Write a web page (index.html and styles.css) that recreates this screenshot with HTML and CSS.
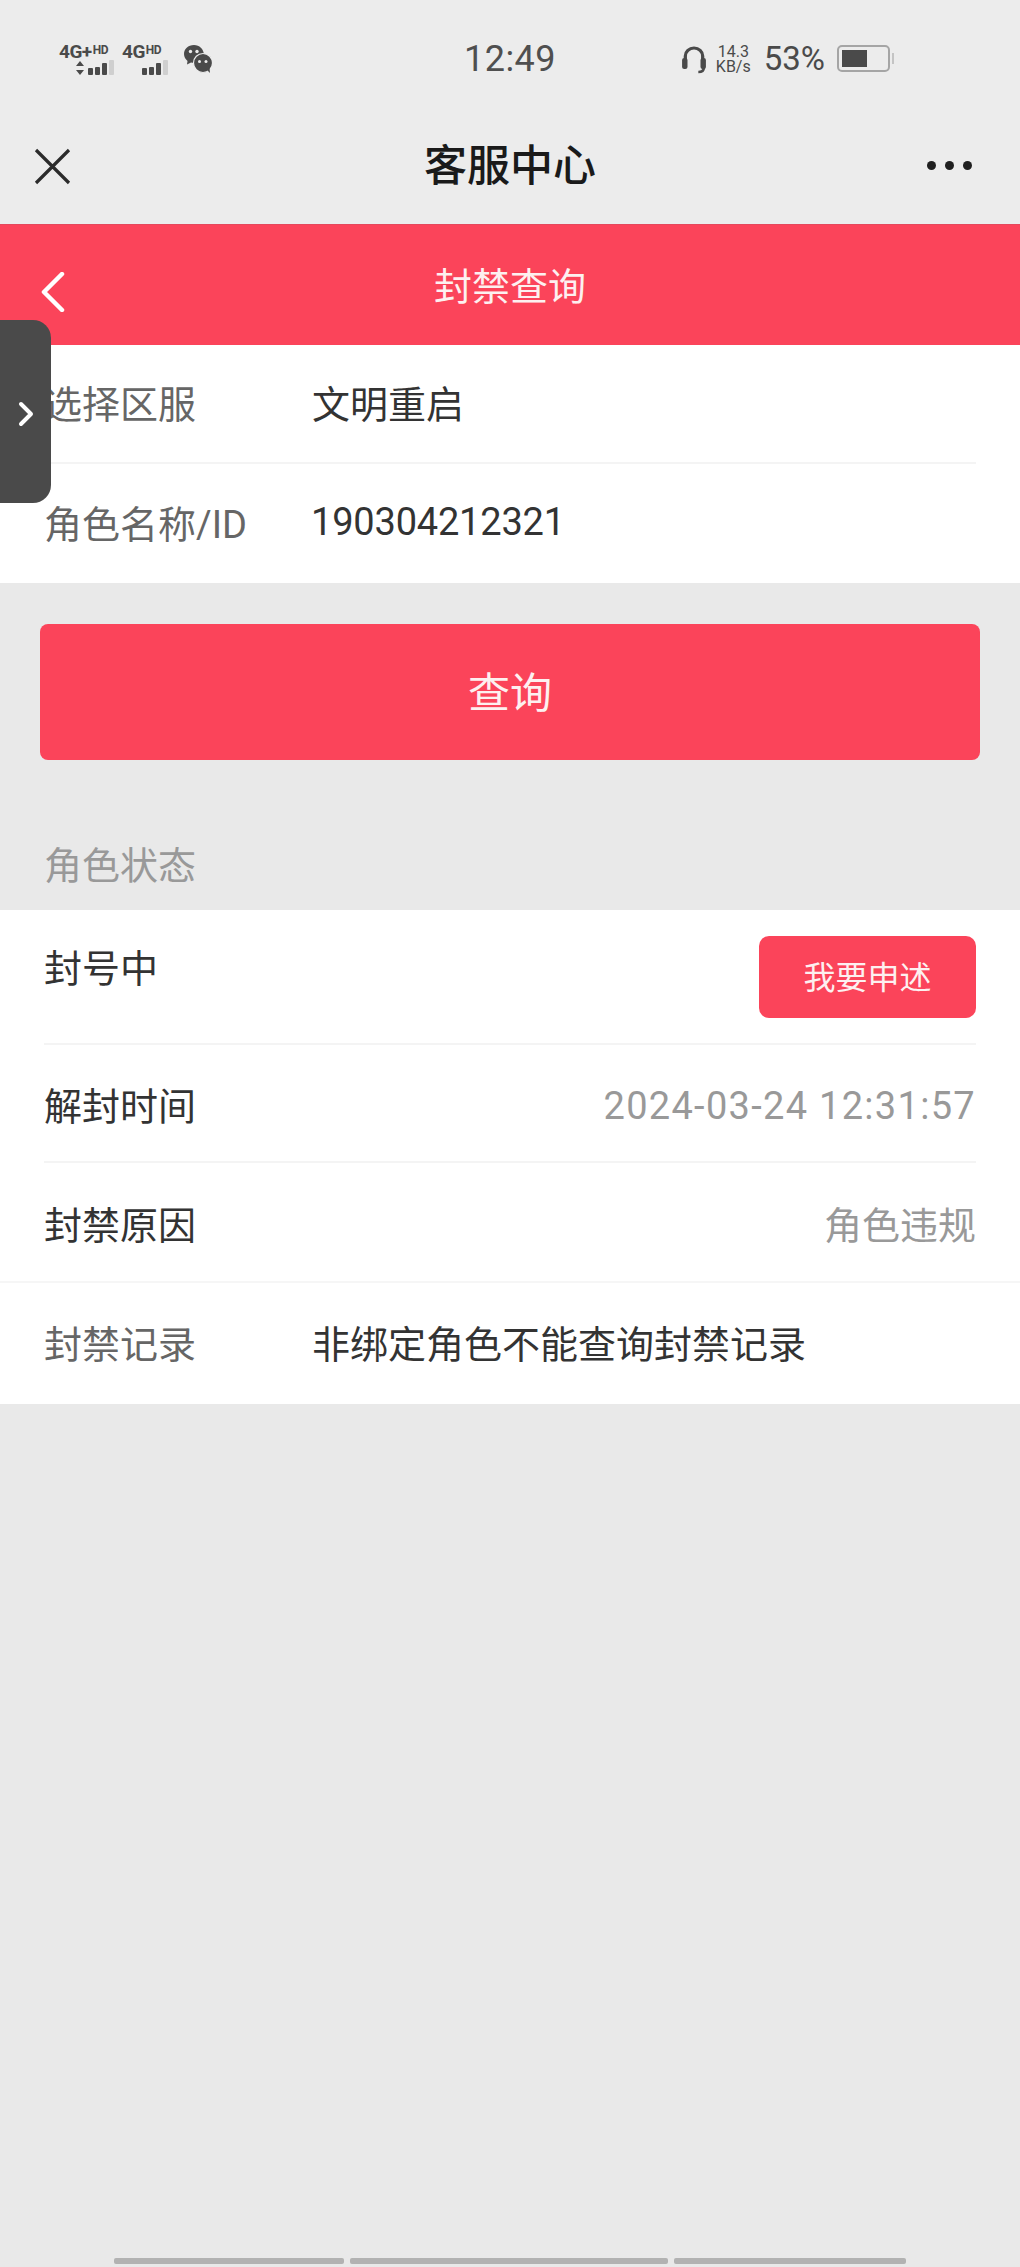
FILE: index.html
```html
<!DOCTYPE html>
<html lang="zh-CN">
<head>
  <meta charset="UTF-8" />
  <meta name="viewport" content="width=device-width, initial-scale=1" />
  <title>客服中心</title>
  <link rel="stylesheet" href="styles.css">
</head>
<body>

<div class="top">
  <!-- Phone status bar -->
  <div class="status-bar">
    <div class="status-left">
      <div class="sim">
        <div class="sim-label">4G+<small>HD</small></div>
        <div class="signal">
          <svg class="updown" width="10" height="14" viewBox="0 0 10 14"><path d="M5 0l4 5H1zM5 14L1 9h8z" fill="#4a4a4a"/></svg>
          <i class="b1"></i><i class="b2"></i><i class="b3"></i><i class="b4"></i>
        </div>
      </div>
      <div class="sim sim-second">
        <div class="sim-label">4G<small>HD</small></div>
        <div class="signal">
          <i class="b1"></i><i class="b2"></i><i class="b3"></i><i class="b4"></i>
        </div>
      </div>
      <svg class="wechat" width="30" height="30" viewBox="0 0 30 30">
        <path d="M11 1C5 1 1 5 1 10c0 3 1.500 5.300 3.500 7L4 20.500 8 18.500c1 .3 2 .5 3 .5 4.500-4 5-5.500 10-8.500C20.500 5 16.500 1 11 1z" fill="#4a4a4a"/>
        <circle cx="20" cy="19" r="9.500" fill="#4a4a4a" stroke="#ececec" stroke-width="1.200"/>
        <path d="M24 26l3 3-.5-5z" fill="#4a4a4a"/>
        <circle cx="7.500" cy="7.500" r="1.700" fill="#ececec"/>
        <circle cx="14" cy="7.500" r="1.700" fill="#ececec"/>
        <circle cx="16.500" cy="17.500" r="1.500" fill="#ececec"/>
        <circle cx="23" cy="17.500" r="1.500" fill="#ececec"/>
      </svg>
    </div>
    <div class="clock">12:49</div>
    <div class="status-right">
      <svg class="headset" width="26" height="30" viewBox="0 0 24 30" preserveAspectRatio="none">
        <path d="M4 17V12a8 8 0 0 1 16 0v5" fill="none" stroke="#4a4a4a" stroke-width="3"/>
        <rect x="1" y="14" width="5" height="11" rx="2" fill="#4a4a4a"/>
        <rect x="18" y="14" width="5" height="11" rx="2" fill="#4a4a4a"/>
        <path d="M21 24c0 3-2 4-5 4" fill="none" stroke="#4a4a4a" stroke-width="2.500"/>
      </svg>
      <div class="speed"><span>14.3</span><span>KB/s</span></div>
      <div class="battery-text">53%</div>
      <div class="battery"><div class="battery-fill"></div></div>
    </div>
  </div>

  <!-- WeChat title bar -->
  <div class="title-bar">
    <svg class="close-icon" width="37" height="37" viewBox="0 0 37 37">
      <path d="M2 2l33 33M35 2L2 35" stroke="#2b2b2b" stroke-width="3.200" fill="none"/>
    </svg>
    <h1>客服中心</h1>
    <div class="dots"><i></i><i></i><i></i></div>
  </div>
</div>

<header class="page-head">
  <svg class="back-icon" width="24" height="40" viewBox="0 0 24 40">
    <path d="M21 2L3 20l18 18" fill="none" stroke="#fff" stroke-width="4.500" stroke-linecap="round" stroke-linejoin="round"/>
  </svg>
  <h2>封禁查询</h2>
</header>

<main>
  <section class="list">
    <div class="row row-inset">
      <span class="label">选择区服</span>
      <span class="value">文明重启</span>
    </div>
    <div class="row">
      <span class="label">角色名称/ID</span>
      <span class="value value-num">190304212321</span>
    </div>
  </section>

  <div class="query-wrap">
    <button class="query-btn">查询</button>
  </div>

  <div class="section-title">角色状态</div>

  <section class="list">
    <div class="row row-inset row-status">
      <span class="label label-dark">封号中</span>
      <button class="appeal-btn">我要申述</button>
    </div>
    <div class="row row-inset row-split">
      <span class="label label-dark">解封时间</span>
      <span class="muted muted-date">2024-03-24 12:31:57</span>
    </div>
    <div class="row row-full row-split">
      <span class="label label-dark">封禁原因</span>
      <span class="muted">角色违规</span>
    </div>
    <div class="row row-last">
      <span class="label">封禁记录</span>
      <span class="value">非绑定角色不能查询封禁记录</span>
    </div>
  </section>
</main>

<!-- Floating side tab -->
<div class="side-tab">
  <svg width="17" height="26" viewBox="0 0 17 26">
    <path d="M3 3l10 10L3 23" fill="none" stroke="#fff" stroke-width="4" stroke-linecap="round" stroke-linejoin="round"/>
  </svg>
</div>

<footer class="bottom-bars">
  <i class="bar-a"></i><i class="bar-b"></i><i class="bar-c"></i>
</footer>

</body>
</html>
```

FILE: styles.css
```css
/* Reset */
* {
  box-sizing: border-box;
  margin: 0;
  padding: 0;
}

body {
  font-family: Roboto, "Noto Sans CJK SC", sans-serif;
  background-color: #e9e9e9;
  color: #333;
  min-height: 2267px;
  display: flex;
  flex-direction: column;
  position: relative;
  overflow: hidden;
}

/* Status bar */
.top {
  background: #ececec;
  height: 224px;
}

.status-bar {
  height: 112px;
  display: grid;
  grid-template-columns: 1fr auto 1fr;
  align-items: center;
  color: #4a4a4a;
  padding-top: 5px;
}

.status-left {
  display: flex;
  align-items: center;
  padding-left: 59px;
}

.sim {
  width: 55px;
}

.sim-second {
  margin-left: 8px;
  width: 46px;
}

.sim-label {
  font-size: 19px;
  font-weight: 700;
  line-height: 17px;
  letter-spacing: -0.5px;
  white-space: nowrap;
}

.sim-label small {
  font-size: 12px;
  vertical-align: 4px;
  margin-left: 1px;
}

.signal {
  display: flex;
  align-items: flex-end;
  justify-content: flex-end;
  gap: 2px;
  height: 15px;
}

.signal .updown {
  margin-right: 1px;
}

.signal i {
  display: block;
  width: 5px;
  background: #4a4a4a;
  border-radius: 1px;
}

.signal .b1 { height: 7px; }
.signal .b2 { height: 8px; }
.signal .b3 { height: 12px; }
.signal .b4 { height: 15px; background: #cfcfcf; }

.wechat {
  margin-left: 15px;
}

.clock {
  font-size: 36px;
  color: #4f4f4f;
  letter-spacing: 0.5px;
}

.status-right {
  display: flex;
  align-items: center;
  justify-content: flex-end;
  padding-right: 130px;
}

.speed {
  display: flex;
  flex-direction: column;
  align-items: center;
  font-size: 16px;
  line-height: 15px;
  margin-left: 9px;
}

.battery-text {
  font-size: 33px;
  margin-left: 13px;
}

.battery {
  width: 53px;
  height: 27px;
  border: 2px solid #a5a5a5;
  border-radius: 5px;
  padding: 3px;
  margin-left: 12px;
  position: relative;
}

.battery::after {
  content: "";
  position: absolute;
  right: -6px;
  top: 6px;
  width: 2px;
  height: 11px;
  background: #c4c4c4;
}

.battery-fill {
  width: 25px;
  height: 100%;
  background: #4a4a4a;
}

/* Title bar */
.title-bar {
  height: 112px;
  display: grid;
  grid-template-columns: 1fr auto 1fr;
  align-items: center;
  padding: 0 48px 4px 34px;
}

.title-bar h1 {
  font-size: 43px;
  font-weight: 500;
  color: #1a1a1a;
  line-height: 1;
  margin-left: 14px;
}

.dots {
  display: flex;
  justify-content: flex-end;
  gap: 9px;
  margin-top: -2px;
}

.dots i {
  display: block;
  width: 9px;
  height: 9px;
  border-radius: 50%;
  background: #1f1f1f;
}

/* Red header */
.page-head {
  height: 121px;
  background: #fb445a;
  border-top: 1px solid #e4485c;
  display: flex;
  align-items: center;
  justify-content: center;
  position: relative;
  padding-top: 3px;
}

.page-head h2 {
  font-size: 38px;
  font-weight: 400;
  color: #fdf0f0;
  line-height: 1;
}

.back-icon {
  position: absolute;
  left: 41px;
  top: 47px;
}

/* Lists */
.list {
  background: #fff;
}

.row {
  height: 119px;
  margin: 0 44px;
  padding-bottom: 4px;
  display: flex;
  align-items: center;
  font-size: 38px;
}

.row-inset {
  border-bottom: 2px solid #f4f4f4;
}

.row-full {
  margin: 0;
  padding: 0 44px;
  border-bottom: 2px solid #f6f6f6;
}

.row-split {
  justify-content: space-between;
  height: 118px;
  padding-top: 0;
  padding-bottom: 0;
}

.row-full.row-split {
  height: 120px;
}

.row-last {
  height: 121px;
}

.row-status {
  height: 135px;
  justify-content: space-between;
  align-items: flex-start;
  padding: 26px 0 0;
}

.row-status .label {
  margin-top: 2px;
}

.label {
  width: 268px;
  flex-shrink: 0;
  color: #666;
  white-space: nowrap;
}

.label-dark {
  color: #333;
}

.value {
  color: #333;
  white-space: nowrap;
}

.value-num {
  letter-spacing: -0.2px;
  margin-left: -1px;
}

.muted {
  color: #999;
  white-space: nowrap;
}

.muted-date {
  letter-spacing: 1.3px;
  margin-top: 5px;
}

/* Buttons */
.query-wrap {
  padding: 41px 40px 0;
}

.query-btn {
  display: block;
  width: 100%;
  height: 136px;
  padding-bottom: 6px;
  border: none;
  border-radius: 8px;
  background: #fb445a;
  color: #fdf0f0;
  font-family: inherit;
  font-size: 42px;
}

.appeal-btn {
  width: 217px;
  height: 82px;
  padding-bottom: 5px;
  border: none;
  border-radius: 10px;
  background: #fb445a;
  color: #fdf0f0;
  font-family: inherit;
  font-size: 32px;
}

.section-title {
  height: 150px;
  padding: 84px 44px 0;
  font-size: 38px;
  line-height: 44px;
  color: #999;
}

/* Floating tab */
.side-tab {
  position: absolute;
  left: 0;
  top: 320px;
  width: 51px;
  height: 183px;
  background: #4a4a4a;
  border-radius: 0 18px 18px 0;
  display: flex;
  align-items: center;
  padding: 5px 0 0 18px;
}

/* Bottom bars */
.bottom-bars {
  margin-top: auto;
  height: 9px;
  display: flex;
  gap: 6px;
  padding: 0 114px;
}

.bottom-bars i {
  display: block;
  height: 6px;
  background: #b2b2b2;
  border-radius: 2px;
}

.bar-a { width: 230px; }
.bar-b { width: 318px; }
.bar-c { width: 232px; }
```
